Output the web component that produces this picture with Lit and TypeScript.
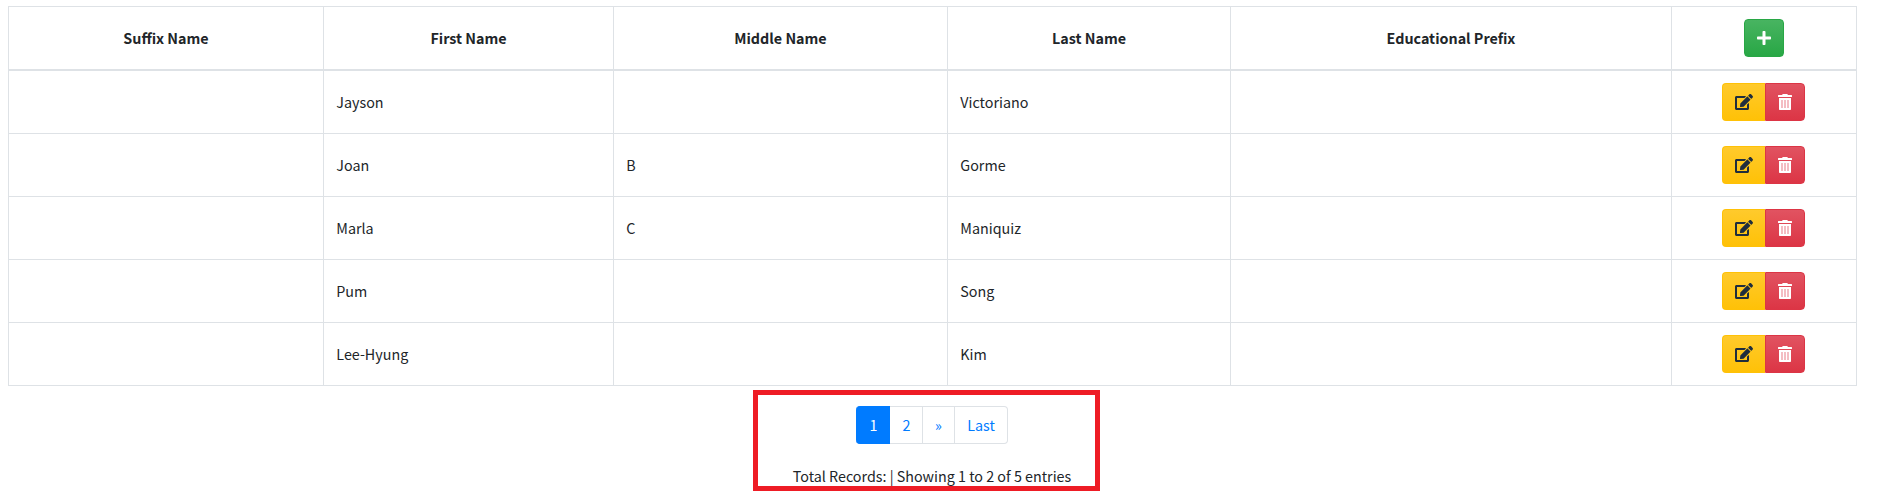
import { LitElement, html, css, svg } from "lit";
import { customElement } from "lit/decorators.js";

interface Person {
  suffix: string;
  first: string;
  middle: string;
  last: string;
  prefix: string;
}

const PEOPLE: Person[] = [
  { suffix: "", first: "Jayson", middle: "", last: "Victoriano", prefix: "" },
  { suffix: "", first: "Joan", middle: "B", last: "Gorme", prefix: "" },
  { suffix: "", first: "Marla", middle: "C", last: "Maniquiz", prefix: "" },
  { suffix: "", first: "Pum", middle: "", last: "Song", prefix: "" },
  { suffix: "", first: "Lee-Hyung", middle: "", last: "Kim", prefix: "" },
];

const HEADERS = ["Suffix Name", "First Name", "Middle Name", "Last Name", "Educational Prefix"];

const plusIcon = svg`<path d="M416 208H272V64c0-17.67-14.33-32-32-32h-32c-17.67 0-32 14.33-32 32v144H32c-17.67 0-32 14.33-32 32v32c0 17.67 14.33 32 32 32h144v144c0 17.67 14.33 32 32 32h32c17.67 0 32-14.33 32-32V304h144c17.67 0 32-14.33 32-32v-32c0-17.67-14.33-32-32-32z"/>`;
const editIcon = svg`<path d="M402.6 83.2l90.2 90.2c3.8 3.8 3.8 10 0 13.8L274.4 405.6l-92.8 10.3c-12.4 1.4-22.9-9.1-21.5-21.5l10.3-92.8L388.8 83.2c3.8-3.8 10-3.8 13.8 0zm162-22.9l-48.8-48.8c-15.2-15.2-39.9-15.2-55.2 0l-35.4 35.4c-3.8 3.8-3.8 10 0 13.8l90.2 90.2c3.8 3.8 10 3.8 13.8 0l35.4-35.4c15.2-15.3 15.2-40 0-55.2zM384 346.2V448H64V128h229.8c3.2 0 6.2-1.3 8.5-3.5l40-40c7.6-7.6 2.2-20.5-8.5-20.5H48C21.5 64 0 85.5 0 112v352c0 26.5 21.5 48 48 48h352c26.5 0 48-21.5 48-48V306.2c0-10.7-12.9-16-20.5-8.5l-40 40c-2.2 2.3-3.5 5.3-3.5 8.5z"/>`;
const trashIcon = svg`
  <path fill-rule="evenodd" d="M1 4h12v11.2a.8.8 0 0 1-.8.8H1.8a.8.8 0 0 1-.8-.8zM3 6v8h2V6zM6 6v8h2V6zM9 6v8h2V6zM.5 1H4l.8-1h4.4l.8 1h3.5a.5.5 0 0 1 .5.5v1a.5.5 0 0 1-.5.5h-13a.5.5 0 0 1-.5-.5v-1a.5.5 0 0 1 .5-.5z"/>
  <path opacity=".65" d="M3 6h2v8H3zM6 6h2v8H6zM9 6h2v8H9z"/>`;

@customElement("app-root")
export class AppRoot extends LitElement {
  static styles = css`
    :host {
      display: block;
      box-sizing: border-box;
      height: 495px;
      padding: 6px 25px 0 8px;
      overflow: hidden;
      background: #fff;
      color: #212529;
      font: 400 14.32px/24px "Noto Sans CJK SC", sans-serif;
    }
    * {
      box-sizing: border-box;
    }
    .table {
      border: solid #dee2e6;
      border-width: 1px 0 0 1px;
    }
    .row {
      display: grid;
      grid-template-columns: 315px 290px 334px 283px 441px 185px;
      height: 63px;
    }
    .row.head {
      height: 64px;
      font-weight: 700;
    }
    .cell {
      display: flex;
      align-items: center;
      padding: 0 12px 0 12.3px;
      border: solid #dee2e6;
      border-width: 0 1px 1px 0;
    }
    .head .cell {
      justify-content: center;
      padding: 0 12px;
      border-bottom-width: 2px;
    }
    .cell.actions {
      padding-left: 50px;
    }
    button {
      display: flex;
      align-items: center;
      justify-content: center;
      height: 38px;
      padding: 0;
      border: 1px solid;
      font: inherit;
    }
    svg {
      display: block;
      height: 16px;
      fill: currentColor;
    }
    .plus,
    .trash {
      width: 14px;
    }
    .pen {
      width: 18px;
    }
    .add {
      width: 40px;
      color: #fff;
      border-color: #28a745;
      border-radius: 4px;
      background: linear-gradient(#48b461, #28a745);
    }
    .edit {
      width: 43px;
      justify-content: flex-start;
      padding-left: 12px;
      color: #1f2d3d;
      border-color: #ffc107;
      border-right: 0;
      border-radius: 4px 0 0 4px;
      background: linear-gradient(#ffca2c, #ffc107);
    }
    .delete {
      width: 40px;
      color: #fff;
      border-color: #dc3545;
      border-radius: 0 4px 4px 0;
      background: linear-gradient(#e15361, #dc3545);
    }
    .footer {
      display: flex;
      flex-direction: column;
      align-items: center;
      width: 347px;
      height: 101px;
      margin: 4px 0 0 745px;
      padding-top: 11px;
      border: 5px solid #ee1c25;
    }
    .pages {
      display: flex;
      flex-shrink: 0;
      height: 38px;
      margin-left: 11px;
    }
    .page {
      display: flex;
      align-items: center;
      justify-content: center;
      color: #007bff;
      border: solid #dee2e6;
      border-width: 1px 1px 1px 0;
    }
    .page.current {
      width: 34px;
      padding-left: 2px;
      color: #fff;
      background: #007bff;
      border-color: #007bff;
      border-radius: 4px 0 0 4px;
    }
    .page.second {
      width: 33px;
      padding-left: 1px;
    }
    .page.next {
      width: 32px;
    }
    .page.last {
      width: 53px;
      border-radius: 0 4px 4px 0;
    }
    .summary {
      flex-shrink: 0;
      margin-top: 20px;
      margin-left: 11px;
      white-space: nowrap;
    }
  `;

  render() {
    return html`
      <div class="table">
        <div class="row head">
          ${HEADERS.map((h) => html`<div class="cell"><span>${h}</span></div>`)}
          <div class="cell">
            <button class="add" aria-label="Add"><svg class="plus" viewBox="0 0 448 512">${plusIcon}</svg></button>
          </div>
        </div>
        ${PEOPLE.map(
          (p) => html`<div class="row">
            ${[p.suffix, p.first, p.middle, p.last, p.prefix].map((v) => html`<div class="cell">${v}</div>`)}
            <div class="cell actions">
              <button class="edit" aria-label="Edit"><svg class="pen" viewBox="0 0 576 512">${editIcon}</svg></button>
              <button class="delete" aria-label="Delete"><svg class="trash" viewBox="0 0 14 16">${trashIcon}</svg></button>
            </div>
          </div>`
        )}
      </div>
      <div class="footer">
        <div class="pages">
          <a class="page current">1</a><a class="page second">2</a><a class="page next">»</a><a class="page last">Last</a>
        </div>
        <div class="summary">Total Records: | Showing 1 to 2 of 5 entries</div>
      </div>
    `;
  }
}
